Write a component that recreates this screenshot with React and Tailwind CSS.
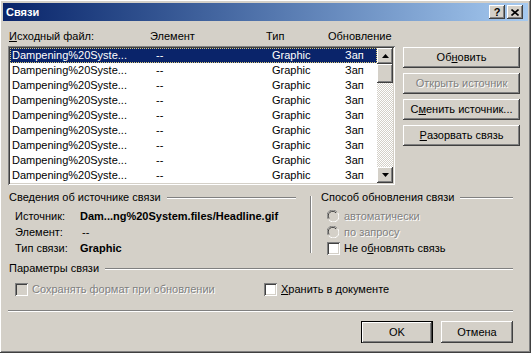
import React from 'react';

const raised =
  'shadow-[inset_-1px_-1px_#404040,inset_1px_1px_#ffffff,inset_-2px_-2px_#808080,inset_2px_2px_#d4d0c8]';
const sunken =
  'shadow-[inset_1px_1px_#808080,inset_-1px_-1px_#ffffff,inset_2px_2px_#404040,inset_-2px_-2px_#d4d0c8]';
const disabledText = 'text-[#808080] [text-shadow:1px_1px_0_#ffffff]';

const rows = Array.from({ length: 9 }, (_, i) => i);

function GroupTitle({ children, lineClass = '' }) {
  return (
    <div className="flex items-center h-[13px]">
      <span className="pl-[1px] pr-[6px] whitespace-nowrap">{children}</span>
      <div className={`flex-1 h-[2px] border-t border-[#808080] border-b border-b-white ${lineClass}`} />
    </div>
  );
}

function Checkbox({ disabled }) {
  return (
    <div
      className={`w-[13px] h-[13px] shrink-0 ${sunken} ${disabled ? 'bg-[#d4d0c8]' : 'bg-white'}`}
    />
  );
}

function Radio() {
  return (
    <svg width="12" height="12" viewBox="0 0 12 12" className="shrink-0">
      <path d="M10 2.2A5.5 5.5 0 0 0 1.2 9" fill="none" stroke="#808080" strokeWidth="1" />
      <path d="M9 3A4.3 4.3 0 0 0 2.2 8.3" fill="none" stroke="#404040" strokeWidth="1" />
      <path d="M2 9.8A5.5 5.5 0 0 0 10.8 3" fill="none" stroke="#ffffff" strokeWidth="1" />
      <circle cx="6" cy="6" r="3.6" fill="#d4d0c8" />
    </svg>
  );
}

function Button({ children, disabled, className = '' }) {
  return (
    <div
      className={`h-[21px] flex items-center justify-center bg-[#d4d0c8] ${raised} ${
        disabled ? disabledText : 'text-black'
      } ${className}`}
    >
      {children}
    </div>
  );
}

function ScrollArrow({ down }) {
  return (
    <div className={`w-[16px] h-[16px] flex items-center justify-center bg-[#d4d0c8] ${raised}`}>
      <svg width="7" height="4" viewBox="0 0 7 4">
        {down ? <path d="M0 0H7L3.5 4Z" fill="#000" /> : <path d="M0 4H7L3.5 0Z" fill="#000" />}
      </svg>
    </div>
  );
}

export default function App() {
  return (
    <div
      className={`w-[531px] h-[353px] bg-[#d4d0c8] p-[3px] flex flex-col font-['Liberation_Sans',Arial,sans-serif] text-[11px] leading-[13px] text-black ${raised}`}
    >
      {/* title bar */}
      <div className="h-[18px] shrink-0 flex items-center bg-gradient-to-r from-[#0a246a] to-[#a6caf0] pl-[3px] pr-[5px]">
        <span className="font-bold text-white flex-1">Связи</span>
        <div className={`w-[16px] h-[14px] bg-[#d4d0c8] flex items-center justify-center font-bold text-[11px] ${raised}`}>
          ?
        </div>
        <div className={`ml-[2px] w-[16px] h-[14px] bg-[#d4d0c8] flex items-center justify-center ${raised}`}>
          <svg width="8" height="7" viewBox="0 0 8 7">
            <path d="M0.5 0.5L7.5 6.5M7.5 0.5L0.5 6.5" stroke="#000" strokeWidth="1.6" />
          </svg>
        </div>
      </div>

      <div className="flex-1 flex flex-col px-[5px]">
        {/* top section */}
        <div className="flex">
          <div className="w-[387px] pt-[9px]">
            <div className="flex h-[13px]">
              <div className="w-[142px] pl-[1px]">
                <span className="underline">И</span>сходный файл:
              </div>
              <div className="w-[116px]">Элемент</div>
              <div className="w-[62px]">Тип</div>
              <div>Обновление</div>
            </div>
            <div className={`mt-[3px] h-[139px] bg-white p-[2px] flex ${sunken}`}>
              <div className="flex-1">
                {rows.map((i) => (
                  <div
                    key={i}
                    className={`h-[15px] flex items-center ${
                      i === 0
                        ? 'bg-[#0a246a] text-white outline-1 outline-dotted outline-[#d8c878] -outline-offset-1'
                        : ''
                    }`}
                  >
                    <div className="w-[146px] pl-[2px] whitespace-nowrap">Dampening%20Syste...</div>
                    <div className="w-[116px]">--</div>
                    <div className="w-[73px]">Graphic</div>
                    <div>Зап</div>
                  </div>
                ))}
              </div>
              <div className="w-[16px] flex flex-col">
                <ScrollArrow />
                <div className="flex-1 flex flex-col bg-[repeating-conic-gradient(#ffffff_0_25%,#d4d0c8_0_50%)] bg-[length:2px_2px]">
                  <div className={`h-[19px] bg-[#d4d0c8] ${raised}`} />
                </div>
                <ScrollArrow down />
              </div>
            </div>
          </div>

          <div className="ml-[8px] w-[117px] pt-[26px] flex flex-col gap-[5px]">
            <Button>
              Об<span className="underline">н</span>овить
            </Button>
            <Button disabled>Открыть источник</Button>
            <Button>
              С<span className="underline">м</span>енить источник...
            </Button>
            <Button>
              <span className="underline">Р</span>азорвать связь
            </Button>
          </div>
        </div>

        {/* source info + update method */}
        <div className="flex mt-[6px]">
          <div className="w-[288px]">
            <GroupTitle>Сведения об источнике связи</GroupTitle>
            <div className="mt-[4px] pl-[7px] leading-[16px]">
              <div className="flex">
                <div className="w-[65px]">Источник:</div>
                <div className="font-bold whitespace-nowrap">Dam...ng%20System.files/Headline.gif</div>
              </div>
              <div className="flex">
                <div className="w-[67px]">Элемент:</div>
                <div>--</div>
              </div>
              <div className="flex">
                <div className="w-[65px]">Тип связи:</div>
                <div className="font-bold">Graphic</div>
              </div>
            </div>
          </div>
          <div className="ml-[14px] mt-[5px] w-[2px] h-[57px] border-l border-[#808080] border-r border-r-white" />
          <div className="ml-[8px] w-[193px]">
            <GroupTitle>Способ обновления связи</GroupTitle>
            <div className="mt-[4px] pl-[7px] leading-[16px]">
              <div className="flex items-center gap-[5px] h-[16px]">
                <Radio />
                <span className={disabledText}>автоматически</span>
              </div>
              <div className="flex items-center gap-[5px] h-[16px]">
                <Radio />
                <span className={disabledText}>по запросу</span>
              </div>
              <div className="flex items-center gap-[4px] h-[16px]">
                <Checkbox />
                <span>
                  Не о<span className="underline">б</span>новлять связь
                </span>
              </div>
            </div>
          </div>
        </div>

        {/* link options */}
        <div className="mt-[6px] w-[505px]">
          <GroupTitle>Параметры связи</GroupTitle>
        </div>
        <div className="mt-[8px] flex items-center h-[13px] pl-[7px]">
          <div className="w-[249px] flex items-center gap-[4px]">
            <Checkbox disabled />
            <span className={disabledText}>Сохранять формат при обновлении</span>
          </div>
          <div className="flex items-center gap-[4px]">
            <Checkbox />
            <span>
              <span className="underline">Х</span>ранить в документе
            </span>
          </div>
        </div>

        <div className="mt-[14px] w-[505px] h-[2px] border-t border-[#808080] border-b border-b-white" />

        <div className="mt-[9px] w-[505px] flex justify-end gap-[8px]">
          <div className="w-[72px] h-[22px] border border-black">
            <Button className="h-[20px]">OK</Button>
          </div>
          <Button className="w-[72px] h-[22px]">Отмена</Button>
        </div>
      </div>
    </div>
  );
}
